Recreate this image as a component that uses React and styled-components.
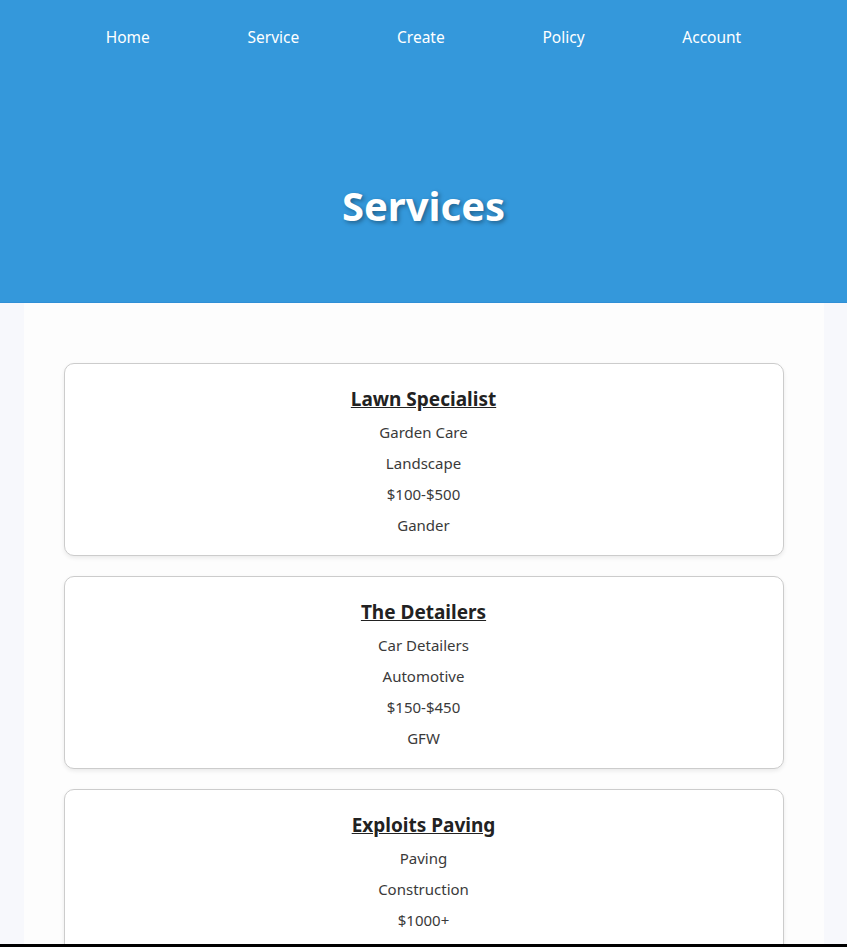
import React from "react";
import styled, { createGlobalStyle } from "styled-components";

const GlobalStyle = createGlobalStyle`
  body {
    margin: 0;
    background: #f7f8fc;
    font-family: "Noto Sans", "Open Sans", sans-serif;
    color: #333;
  }
`;

const Header = styled.header`
  background: #3498db;
  height: 302px;
  border-bottom: 1px solid #2f8fd6;
  display: flex;
  flex-direction: column;
`;

const Nav = styled.nav`
  display: flex;
  justify-content: space-evenly;
  padding: 25px 8px 0;
`;

const NavLink = styled.a`
  color: #fff;
  font-size: 15.5px;
  line-height: 24px;
  text-decoration: none;
  cursor: pointer;
`;

const Title = styled.h1`
  margin: 129px 0 0;
  text-align: center;
  color: #fff;
  font-size: 40px;
  line-height: 56px;
  font-weight: 700;
  text-shadow: 2px 2px 4px rgba(0, 0, 0, 0.35);
`;

const Main = styled.main`
  width: 800px;
  margin: 0 auto;
  background: #fdfdfd;
  padding: 60px 40px 20px;
  box-sizing: border-box;
  display: flex;
  flex-direction: column;
  gap: 20px;
`;

const Card = styled.div`
  background: #fff;
  border: 1px solid #ccc;
  border-radius: 10px;
  box-shadow: 0 2px 4px rgba(0, 0, 0, 0.08);
  padding: 22px 20px 19px;
  display: flex;
  flex-direction: column;
  align-items: center;
  gap: 10px;
`;

const CardTitle = styled.h3`
  margin: 0;
  font-size: 19px;
  line-height: 26px;
  font-weight: 700;
  color: #222;
  text-decoration: underline;
`;

const Line = styled.p`
  margin: 0;
  font-size: 15px;
  line-height: 21px;
  color: #3a3a3a;
`;

const BottomEdge = styled.div`
  position: fixed;
  left: 0;
  right: 0;
  bottom: 0;
  height: 3px;
  background: #000;
`;

const services = [
  { name: "Lawn Specialist", lines: ["Garden Care", "Landscape", "$100-$500", "Gander"] },
  { name: "The Detailers", lines: ["Car Detailers", "Automotive", "$150-$450", "GFW"] },
  { name: "Exploits Paving", lines: ["Paving", "Construction", "$1000+", "Grand Falls"] },
];

export default function App() {
  return (
    <>
      <GlobalStyle />
      <Header>
        <Nav>
          {["Home", "Service", "Create", "Policy", "Account"].map((l) => (
            <NavLink key={l}>{l}</NavLink>
          ))}
        </Nav>
        <Title>Services</Title>
      </Header>
      <Main>
        {services.map((s) => (
          <Card key={s.name}>
            <CardTitle>{s.name}</CardTitle>
            {s.lines.map((l) => (
              <Line key={l}>{l}</Line>
            ))}
          </Card>
        ))}
      </Main>
      <BottomEdge />
    </>
  );
}
